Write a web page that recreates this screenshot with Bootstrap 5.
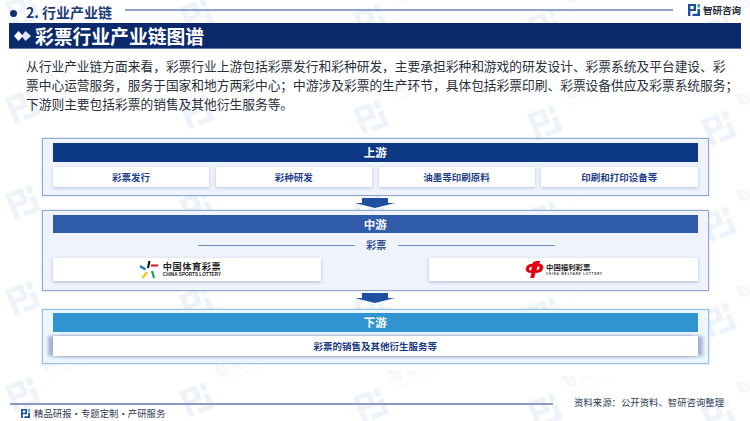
<!DOCTYPE html>
<html lang="zh-CN">
<head>
<meta charset="utf-8">
<title>彩票行业产业链图谱</title>
<link href="https://cdn.jsdelivr.net/npm/bootstrap@5.3.0/dist/css/bootstrap.min.css" rel="stylesheet">
<style>
html,body{width:750px;height:421px;overflow:hidden;background:#fff;font-family:"Noto Sans CJK SC","Liberation Sans",sans-serif}
.wm-layer{position:absolute;inset:0;width:750px;height:421px;z-index:0}
.sheet{position:relative;z-index:1;width:750px;height:421px}
.top-head{height:23px;padding-left:10px}
.dot-mark{width:7px;height:7px;border-radius:50%;background:#12306f;margin-top:3px}
.sec-name{font-size:14px;font-weight:700;color:#1c3a78;margin-left:9px;width:99px;line-height:26px;white-space:nowrap}
.head-rule{width:548px;height:1.5px;background:#8ea2cb;margin-top:-3px}
.brand-mark{margin-left:15px;margin-top:-3px}
.brand-name{font-size:9.5px;font-weight:700;color:#222a3a;margin-left:3px;margin-top:-3px;line-height:12px;white-space:nowrap}
.title-bar{margin-left:9px;width:732px;height:26px;background:#0b2a6b;border-bottom:1px solid #5d78ac;padding-left:5px}
.title-text{font-size:18.8px;font-weight:700;color:#fff;line-height:25px;margin-left:4px;white-space:nowrap}
.intro{margin:7px 0 0 26px;width:720px;font-size:12.72px;line-height:19px;color:#2a2f3a;height:82px}
.chain{margin-left:42px;width:666.5px;padding:0 10px;border:1.5px solid #8fa6d2;background:#eef3fc;box-shadow:0 0 2px rgba(90,120,180,.35)}
.chain-a{height:58px;padding-top:4px}
.chain-b{height:80.5px;padding-top:3.5px}
.chain-c{height:55px;padding-top:3.5px;border-color:#8fc3e6;background:#eef6fd}
.band{height:18.5px;line-height:18.5px;text-align:center;font-size:11.5px;font-weight:700;color:#fff}
.band-a{background:#0e3a85}
.band-b{background:#2f5ba8}
.band-c{background:#2f94d0}
.cell-row{gap:6.5px;margin-top:5.5px}
.cell-box{flex:1 1 0;height:20px;line-height:20px;text-align:center;background:#fff;font-size:9.5px;font-weight:700;color:#1f3f8a;box-shadow:0 1px 3px rgba(90,120,180,.4)}
.flow-arrow{height:14px}
.flow-arrow-tall{height:18px;padding-bottom:4px}
.sub-row{margin-top:5px;height:14px;padding:0 143px 0 145px}
.sub-line{flex:1 1 0;height:1px;background:#6f8abb}
.sub-label{width:43px;text-align:center;font-size:10px;font-weight:700;color:#2f4f8f;line-height:14px}
.logo-row{margin-top:6px;justify-content:space-between}
.logo-box{height:23px;background:#fff;box-shadow:0 1px 3px rgba(90,120,180,.45)}
.logo-l{width:268px;padding-right:14px}
.logo-r{width:269px}
.logo-cn{font-weight:700;color:#1e1e1e;line-height:1;white-space:nowrap}
.logo-en{font-weight:700;color:#1e1e1e;line-height:1;white-space:nowrap}
.sports-cn{font-size:9.2px;letter-spacing:.55px}
.sports-en{font-size:4.7px;margin-top:2px;font-family:"Liberation Sans",sans-serif}
.welfare-cn{font-size:7.4px}
.welfare-en{font-size:2.8px;margin-top:2px;letter-spacing:.95px;font-family:"Liberation Sans",sans-serif}
.wide-cell{height:20px;margin-top:4.5px;line-height:20px;text-align:center;background:#fff;font-size:9.5px;font-weight:700;color:#1c3a80;box-shadow:-5px 0 3px rgba(120,140,190,.6),5px 0 3px rgba(120,140,190,.6),0 1px 3px rgba(90,120,180,.3)}
.foot-zone{margin-top:36px}
.foot-rule{margin-left:10px;width:543px;height:2px;background:#8c98c0;margin-top:3px}
.foot-source{margin-left:21px;font-size:9.4px;color:#2d3a55;line-height:12px;margin-top:-4px;white-space:nowrap}
.foot-left{margin:-1px 0 0 21px}
.foot-slogan{font-size:9.4px;color:#2d3a55;line-height:13px;margin-left:4px;white-space:nowrap}
</style>
</head>
<body class="position-relative m-0">
<svg class="wm-layer" aria-hidden="true" viewBox="0 0 750 421">
<defs>
<g id="logoglyph">
<path fill-rule="evenodd" d="M0 0H8V7H2.400V12H0ZM2.400 2V5H5.600V2ZM9.500 0H12V3.500H9.500ZM9.500 5H12V12H4.500V9.800H9.500Z"/>
</g>
<pattern id="wmark" x="5" y="-26" width="174" height="96" patternUnits="userSpaceOnUse" patternTransform="skewY(1.8)">
<g transform="translate(0 28) rotate(-22) scale(2.3)" fill="#eef3f9"><use href="#logoglyph"/></g>
<g transform="translate(38 12) rotate(-22)" fill="#eff3f8">
<text x="0" y="0" font-size="15" font-family="Noto Sans CJK SC" letter-spacing="3">智研咨询</text>
<text x="1" y="8" font-size="4" font-family="Liberation Sans" letter-spacing=".5">INTELLIGENCE RESEARCH GROUP</text>
</g>
</pattern>
</defs>
<rect width="750" height="421" fill="url(#wmark)"/>
</svg>
<div class="sheet">
  <div class="top-head d-flex align-items-center">
    <span class="dot-mark"></span>
    <span class="sec-name">2. 行业产业链</span>
    <span class="head-rule"></span>
    <svg class="brand-mark" width="12" height="12" viewBox="0 0 12 12"><path fill="#1d4f9c" fill-rule="evenodd" d="M0 0H8V7H2.400V12H0ZM2.400 2V5H5.600V2Z"/><path fill="#2c9bd8" d="M9.500 0H12V3.500H9.500Z"/><path fill="#1d4f9c" d="M9.500 5H12V12H4.500V9.800H9.500Z"/></svg>
    <span class="brand-name">智研咨询</span>
  </div>
  <div class="title-bar d-flex align-items-center">
    <svg width="17" height="10" viewBox="0 0 17 10"><path fill="#fff" d="M4.500 0 9 5 4.500 10 0 5Z"/><path fill="#dfe7f5" d="M11.500 0 17 5 11.500 10 7.500 5Z"/></svg>
    <span class="title-text">彩票行业产业链图谱</span>
  </div>
  <p class="intro">从行业产业链方面来看，彩票行业上游包括彩票发行和彩种研发，主要承担彩种和游戏的研发设计、彩票系统及平台建设、彩<br>票中心运营服务，服务于国家和地方两彩中心；中游涉及彩票的生产环节，具体包括彩票印刷、彩票设备供应及彩票系统服务；<br>下游则主要包括彩票的销售及其他衍生服务等。</p>
  <section class="chain chain-a">
    <div class="band band-a">上游</div>
    <div class="cell-row d-flex">
      <div class="cell-box">彩票发行</div>
      <div class="cell-box">彩种研发</div>
      <div class="cell-box">油墨等印刷原料</div>
      <div class="cell-box">印刷和打印设备等</div>
    </div>
  </section>
  <div class="flow-arrow d-flex justify-content-center align-items-center">
    <svg width="40" height="10" viewBox="0 0 40 10"><path fill="#1f4f9f" d="M7 0H33V5H40L20 10 0 5H7Z"/></svg>
  </div>
  <section class="chain chain-b">
    <div class="band band-b">中游</div>
    <div class="sub-row d-flex align-items-center">
      <span class="sub-line"></span>
      <span class="sub-label">彩票</span>
      <span class="sub-line"></span>
    </div>
    <div class="logo-row d-flex">
      <div class="logo-box logo-l d-flex align-items-center justify-content-center">
        <svg width="20" height="20" viewBox="0 0 20 20" class="me-1">
          <path stroke="#1a1a1a" stroke-width="2.200" d="M9 8 10.500 1"/>
          <path stroke="#d4232b" stroke-width="2.200" d="M12 5.500H19"/>
          <path stroke="#1fa35c" stroke-width="2.200" d="M13 11 15 18"/>
          <path stroke="#f2c21a" stroke-width="2.200" d="M8 12 3.500 18"/>
          <path stroke="#1a7cc8" stroke-width="2.200" d="M6.500 9.500 1 6"/>
        </svg>
        <div>
          <div class="logo-cn sports-cn">中国体育彩票</div>
          <div class="logo-en sports-en">CHINA SPORTS LOTTERY</div>
        </div>
      </div>
      <div class="logo-box logo-r d-flex align-items-center justify-content-center">
        <svg width="23" height="19" viewBox="0 0 20 20">
          <path fill="#e60012" d="M12 1h4l-1 3c3 0 5 2 4 5-1 4-5 5-8 4.500L9.500 19H5.500l1.300-5.500C3 14 0 12 1 8.500 2 5 5 3.800 8 4L8.600 2ZM7.500 7C5.500 7 4.500 8 4.300 9.300 4 10.500 5 11 6.300 11.200ZM12 10.500c2 0 3-1 3.300-2.200C15.500 7.200 14.500 6.800 13.200 6.800Z"/>
        </svg>
        <div>
          <div class="logo-cn welfare-cn">中国福利彩票</div>
          <div class="logo-en welfare-en">CHINA WELFARE LOTTERY</div>
        </div>
      </div>
    </div>
  </section>
  <div class="flow-arrow flow-arrow-tall d-flex justify-content-center align-items-center">
    <svg width="40" height="10" viewBox="0 0 40 10"><path fill="#1f4f9f" d="M7 0H33V5H40L20 10 0 5H7Z"/></svg>
  </div>
  <section class="chain chain-c">
    <div class="band band-c">下游</div>
    <div class="wide-cell">彩票的销售及其他衍生服务等</div>
  </section>
  <div class="foot-zone d-flex">
    <span class="foot-rule"></span>
    <span class="foot-source">资料来源：公开资料、智研咨询整理</span>
  </div>
  <div class="foot-left d-flex align-items-center">
    <svg width="9" height="9" viewBox="0 0 12 12"><path fill="#1d4f9c" fill-rule="evenodd" d="M0 0H8V7H2.400V12H0ZM2.400 2V5H5.600V2Z"/><path fill="#2c9bd8" d="M9.500 0H12V3.500H9.500Z"/><path fill="#1d4f9c" d="M9.500 5H12V12H4.500V9.800H9.500Z"/></svg>
    <span class="foot-slogan">精品研报·专题定制·产研服务</span>
  </div>
</div>
<script src="https://cdn.jsdelivr.net/npm/bootstrap@5.3.0/dist/js/bootstrap.bundle.min.js"></script>
</body>
</html>
